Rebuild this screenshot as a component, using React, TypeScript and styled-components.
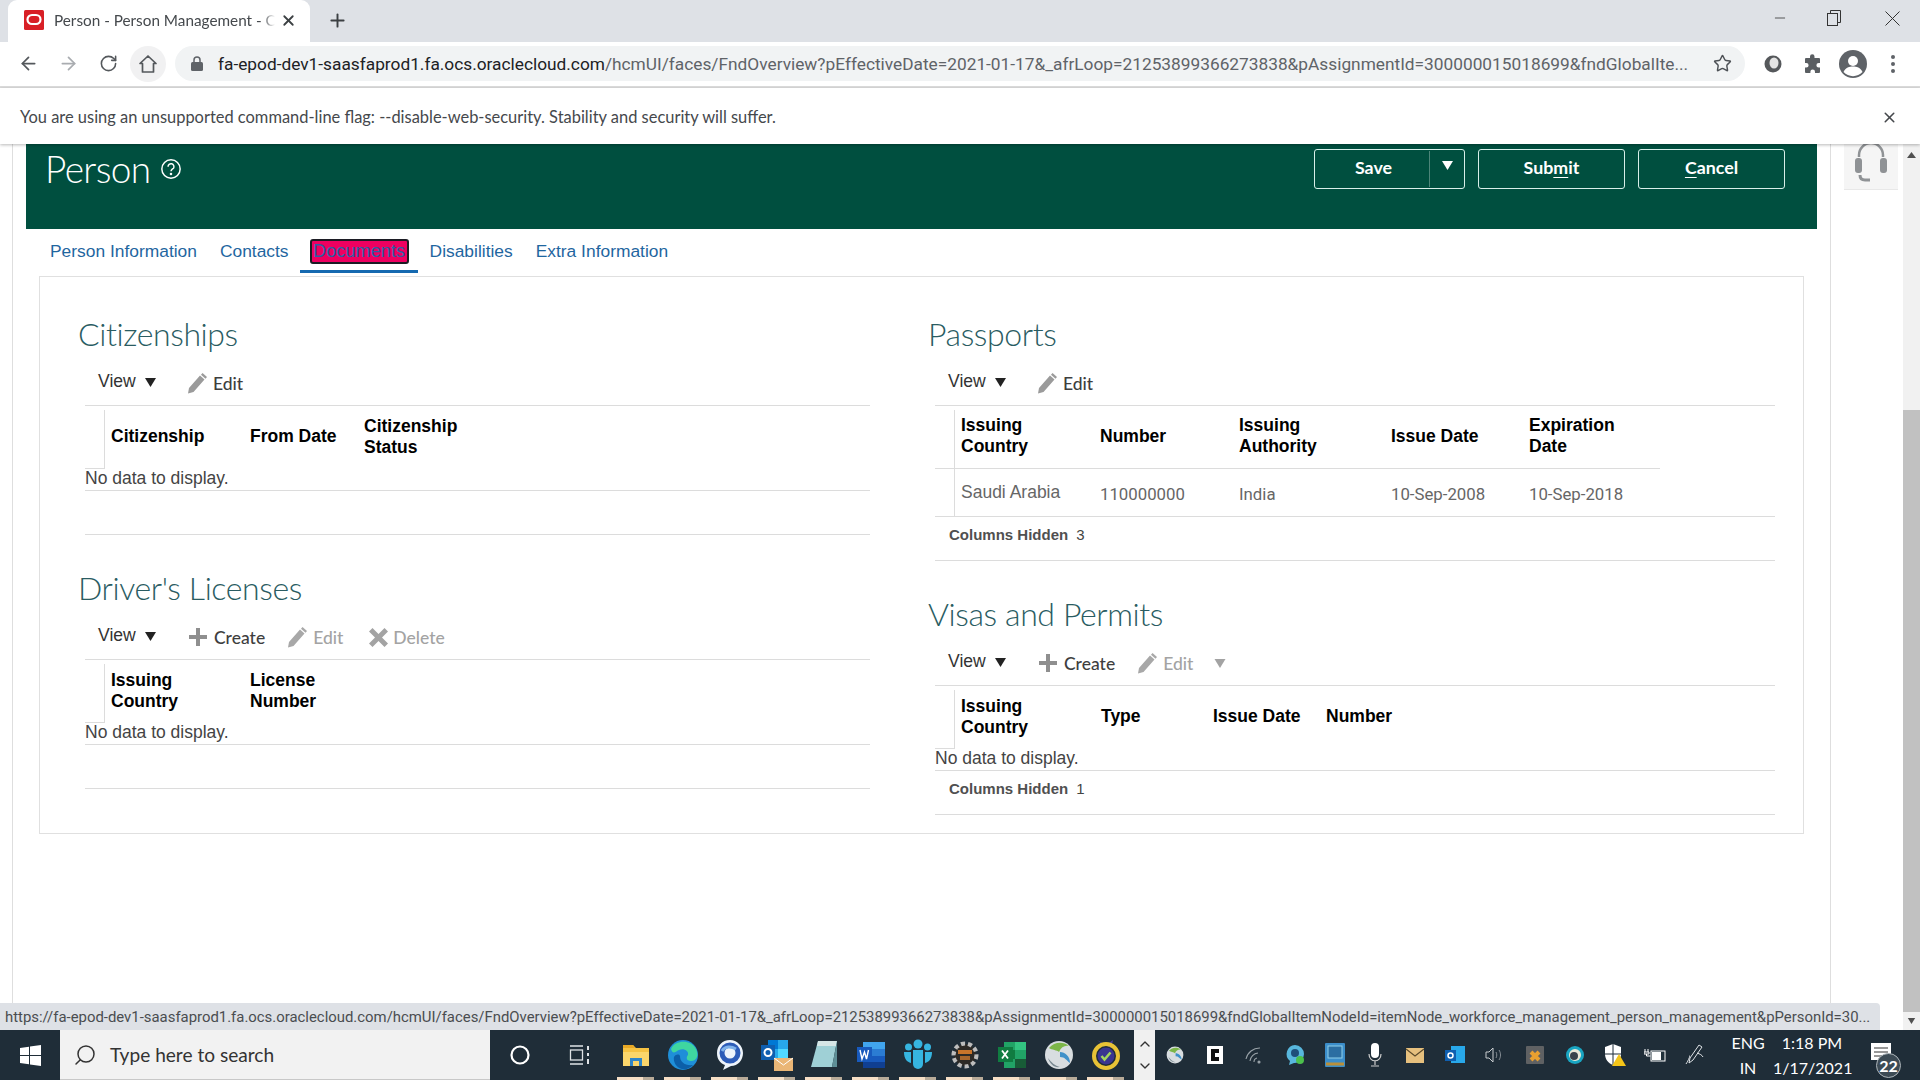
import React from "react";
import styled, { createGlobalStyle } from "styled-components";
import { ArrowLeft, ArrowRight, RotateCw, Star, Search, Minus, X, Plus, ChevronUp, ChevronDown } from "lucide-react";

const Global = createGlobalStyle`
  html, body { margin: 0; padding: 0; background: #fff; overflow: hidden; }
  * { box-sizing: border-box; }
`;

const UI = `"Lato", "Open Sans", "Liberation Sans", sans-serif`;
const ROBOTO = `"Roboto", "Open Sans", sans-serif`;
const ARIAL = `"Liberation Sans", Arial, sans-serif`;

const Screen = styled.div`
  width: 1920px; height: 1080px; display: flex; flex-direction: column; overflow: hidden; font-family: ${UI}; background: #fff;
`;
const TabStrip = styled.div`
  height: 42px; background: #dee1e6; display: flex; align-items: flex-end; padding-left: 8px; flex: none;
`;
const BrowserTab = styled.div`
  width: 302px; height: 42px; background: #fff; border-radius: 9px 9px 0 0; display: flex; align-items: center; padding: 0 12px 2px 16px; color: #3c4043;
`;
const TabTitle = styled.span`
  font-size: 15.3px; margin-left: 10px; width: 221px; white-space: nowrap; overflow: hidden; color: #45494d;
  -webkit-mask-image: linear-gradient(90deg, #000 94%, transparent);
`;
const TabClose = styled.span`margin-left: 5px; display: flex; color: #3c4043;`;
const NewTab = styled.span`margin: 0 0 2px 17px; align-self: center; display: flex; color: #3c4043;`;
const WindowControls = styled.div`
  margin-left: auto; display: flex; align-self: flex-start; height: 36px; align-items: center; color: #333;
`;
const WinButton = styled.span`
  width: 56px; display: flex; justify-content: center;
  &:nth-child(2) { padding-right: 5px; }
`;

const ToolBar = styled.div`
  height: 46px; flex: none; background: #fff; display: flex; align-items: center; padding: 0 0 1px 8px; border-bottom: 2px solid #dcdcdc;
`;
const NavButton = styled.span<{ $dim?: boolean; $round?: boolean }>`
  width: 40px; height: 36px; display: flex; align-items: center; justify-content: center; color: ${p => (p.$dim ? "#a9acb0" : "#54585c")};
  ${p => p.$round && `background: #f1f1f2; border-radius: 50%; width: 36px; margin-left: 2px; margin-right: 2px;`}
`;
const Omnibox = styled.div`
  margin-left: 7px; width: 1570px; height: 35px; border-radius: 18px; background: #f1f3f4; display: flex; align-items: center; padding: 0 13px 0 16px;
`;
const UrlText = styled.div`
  margin-left: 15px; flex: 1; font: 400 17.3px ${ROBOTO}; white-space: nowrap; color: #5f6368;
  b { font-weight: 400; color: #202124; }
`;
const ExtArea = styled.div`display: flex; margin-left: 8px;`;
const ExtButton = styled.span`width: 40px; display: flex; justify-content: center; align-items: center;`;

const InfoBar = styled.div`
  height: 56px; flex: none; background: #fff; display: flex; align-items: center; justify-content: space-between; padding: 2px 22px 0 20px; font-size: 16.45px; color: #45484c;
  position: relative; z-index: 2; box-shadow: 0 1px 3px rgba(0,0,0,.28);
`;

const Content = styled.div`
  flex: 1; display: flex; position: relative; min-height: 0; background: #fff;
`;
const Main = styled.div`
  width: 1819px; margin-left: 12px; flex: none; border-left: 1px solid #dedede; border-right: 1px solid #dedede; padding-left: 13px;
`;
const Banner = styled.div`
  width: 1791px; height: 85px; background: #004f3f; display: flex; align-items: flex-start; justify-content: space-between; padding: 5px 32px 0 19px;
`;
const TitleGroup = styled.div`display: flex; align-items: center; height: 40px; color: #fff; gap: 9px;`;
const PageTitle = styled.h1`
  margin: 0; font: 300 37px/40px ${UI}; letter-spacing: -.6px; color: #fff;
`;
const ButtonRow = styled.div`display: flex; gap: 13px;`;
const ActionButton = styled.button`
  width: 147px; height: 40px; background: transparent; border: 1px solid #d8efe9; border-radius: 3px; color: #fff; font: 700 17.8px ${UI}; padding: 0 0 4px;
  u { text-underline-offset: 3px; }
`;
const SplitButton = styled.div`
  width: 151px; height: 40px; border: 1px solid #d8efe9; border-radius: 3px; display: flex; color: #fff; font: 700 17.8px ${UI}; align-items: center;
`;
const SplitLabel = styled.span`width: 115px; text-align: center; height: 36px; line-height: 33px; padding-left: 3px; border-right: 1px solid #4d8579;`;
const SplitCaret = styled.span`flex: 1; display: flex; justify-content: center; padding-bottom: 8px;`;

const Tabs = styled.nav`display: flex; height: 44px; padding-left: 12.5px; margin-bottom: 3px;`;
const PageTab = styled.a<{ $active?: boolean }>`
  padding: 4px 11.5px 0; height: 44px; display: flex; align-items: center; font: 400 17.4px ${ARIAL}; color: #1f669f;
  border-bottom: 3px solid ${p => (p.$active ? "#1569b0" : "transparent")};
`;
const FocusMark = styled.span`
  display: inline-block; margin: 0 -2px; padding: 0 1.5px; height: 25px; font-size: 18.2px; line-height: 21px; background: #ee0060; border: 2px solid #1c1c24; border-radius: 3px; color: #2b5fa6;
`;

const Card = styled.section`
  margin-left: 13px; width: 1765px; height: 558px; border: 1px solid #e0e0e0; padding: 38px 0 0 39px; display: grid; grid-template-columns: 850px 847px; align-items: start;
`;
const Column = styled.div`display: flex; flex-direction: column; gap: 34px;`;
const Section = styled.div``;
const Heading = styled.h2`
  margin: 0 0 4px -1px; font: 300 32px/38px ${UI}; letter-spacing: -.4px; color: #2a5c62;
`;
const Body = styled.div<{ $width: number }>`margin-left: 6px; width: ${p => p.$width}px;`;
const Actions = styled.div`
  height: 49px; border-bottom: 1px solid #dcdcdc; display: flex; align-items: center; padding-left: 13px; padding-top: 4px;
`;
const ViewMenu = styled.span`
  font: 400 17.6px ${ARIAL}; color: #333; display: flex; align-items: center; gap: 9px; margin-top: -4px; width: 60px; margin-right: 29px;
  svg { margin-top: 3px; }
`;
const ActionItem = styled.span<{ $off?: boolean; $wide?: boolean; $tight?: boolean }>`
  display: flex; align-items: center; gap: ${p => (p.$wide ? "7px" : "5px")}; font: 500 17.5px ${UI}; color: ${p => (p.$off ? "#a3a3a3" : "#3e3e3e")}; margin-right: ${p => (p.$wide ? "22px" : "26px")};
  ${p => p.$wide && "margin-left: 2px;"}
  ${p => p.$tight && "margin-left: -5px;"}
  svg { flex: none; }
`;
const HeadRow = styled.div`display: flex; height: 63px;`;
const Corner = styled.div`width: 20px; margin-top: 4px; border-right: 1px solid #dcdcdc; border-bottom: 1px solid #dcdcdc; flex: none;`;
const HeadCells = styled.div<{ $lined?: boolean }>`display: flex; ${p => p.$lined && "border-bottom: 1px solid #dcdcdc;"}`;
const HeadCell = styled.div<{ $w: number }>`
  width: ${p => p.$w}px; padding: 0 0 2px 6px; font: 700 17.5px/21px ${ARIAL}; color: #000; display: flex; align-items: center;
`;
const NoData = styled.div`
  height: 22px; font: 400 17.5px/18px ${ARIAL}; color: #444; border-bottom: 1px solid #dcdcdc;
`;
const DataRow = styled.div`display: flex; height: 48px; border-bottom: 1px solid #dcdcdc;`;
const DataLead = styled.div`width: 20px; border-right: 1px solid #dcdcdc; flex: none;`;
const DataCell = styled.div<{ $w: number; $arial?: boolean }>`
  width: ${p => p.$w}px; padding-left: 6px; display: flex; align-items: center; color: #666;
  font: 400 ${p => (p.$arial ? "17.5px" : "16.8px")} ${p => (p.$arial ? ARIAL : ROBOTO)};
  ${p => !p.$arial && "padding-top: 2px;"}
`;
const Footer = styled.div`
  height: 44px; border-bottom: 1px solid #dcdcdc; padding: 0 0 8px 14px; display: flex; align-items: center; gap: 8px; font: 400 15px ${ARIAL}; color: #444;
  b { color: #505050; }
`;

const StatusBubble = styled.div`
  position: absolute; left: 0; bottom: 0; width: 1880px; height: 27px; background: #dee1e6; border-top-right-radius: 4px; z-index: 3; font: 400 14.9px/28px ${ROBOTO}; padding-left: 5px; color: #4a4d50; white-space: nowrap;
`;
const SidePanel = styled.div`width: 72px; flex: none; padding-left: 13px;`;
const HelpTile = styled.div`width: 54px; height: 46px; background: #f5f5f5; border-bottom: 1px solid #e8e8e8; display: flex; justify-content: center; overflow: hidden;`;
const Scrollbar = styled.div`
  width: 17px; flex: none; background: #f1f1f1; display: flex; flex-direction: column; align-items: center;
`;
const ScrollThumb = styled.div`width: 17px; height: 602px; margin-top: 244px; background: #c1c1c1;`;
const ScrollEnd = styled.div<{ $h: number }>`
  height: ${p => p.$h}px; width: 17px; display: flex; align-items: center; justify-content: center;
`;

const Taskbar = styled.footer`
  height: 50px; flex: none; background: #1f2d38; display: flex; align-items: stretch; color: #fff;
`;
const StartButton = styled.div`width: 60px; display: flex; align-items: center; justify-content: center;`;
const SearchBox = styled.div`
  width: 430px; background: #f2f2f2; display: flex; align-items: center; padding-left: 13px; gap: 13px; font-size: 19.1px; color: #333; border-bottom: 1px solid #c8c8c8;
`;
const TaskSlot = styled.div`width: 60px; display: flex; align-items: center; justify-content: center;`;
const AppSlot = styled.div<{ $first?: boolean }>`
  width: 47px; display: flex; align-items: center; justify-content: center; position: relative; margin-left: ${p => (p.$first ? "2px" : "0")};
  &::after { content: ""; position: absolute; left: 5px; right: 5px; bottom: 0; height: 3px; background: linear-gradient(90deg, #f6dfc6 70%, #b8ab99 70%); }
`;
const OverflowChevrons = styled.div`
  width: 21px; margin-left: 5px; background: #f0f0f0; display: flex; flex-direction: column; align-items: center; justify-content: space-around; color: #333; padding: 3px 0;
`;
const Tray = styled.div`display: flex; width: 568px;`;
const TrayIcon = styled.div`width: 40px; display: flex; align-items: center; justify-content: center; flex: none;`;
const Lang = styled.div`
  width: 50px; text-align: center; font-size: 16px; line-height: 25px;
`;
const Clock = styled.div`width: 78px; text-align: center; font-size: 16px; line-height: 25px;`;
const NoticeArea = styled.div`flex: 1; position: relative; display: flex; align-items: center; justify-content: center; padding: 0 10px 4px 0;`;
const NoticeBadge = styled.span`
  position: absolute; left: 25px; top: 23px; width: 25px; height: 25px; border-radius: 50%; background: #3d4b55; border: 1px solid #aeb6bb; font: 700 16px/23px ${UI}; text-align: center; color: #fff;
`;

const Pencil = ({ off }: { off?: boolean }) => (
  <svg width="21" height="22" viewBox="0 0 21 22"><path d="M15.5 1l4.5 4-1.5 1.7-4.5-4zM13 3.6l4.5 4L6.5 20 1 21.5l1-5.6z" fill={off ? "#a8a8a8" : "#9b9b9b"} /></svg>
);
const PlusIcon = () => (
  <svg width="18" height="18" viewBox="0 0 18 18"><path d="M7 0h4v7h7v4h-7v7H7v-7H0V7h7z" fill="#8f8f8f" /></svg>
);
const CrossIcon = () => (
  <svg width="19" height="19" viewBox="0 0 19 19"><path d="M3.500 0l6 6 6-6L19 3.500l-6 6 6 6-3.500 3.500-6-6-6 6L0 15.500l6-6-6-6z" fill="#a3a3a3" /></svg>
);
const Caret = ({ color = "#222", w = 11, h = 9 }: { color?: string; w?: number; h?: number }) => (
  <svg width={w} height={h} viewBox="0 0 11 9"><path d="M0 0h11L5.500 9z" fill={color} /></svg>
);
const UpCaret = () => (
  <svg width="9" height="6" viewBox="0 0 9 6"><path d="M0 6h9L4.500 0z" fill="#505050" /></svg>
);
const HouseIcon = () => (
  <svg width="20" height="20" viewBox="0 0 20 20" fill="none" stroke="#54585c" strokeWidth="1.700" strokeLinejoin="round"><path d="M10 2L2 9.500h2.500V18h11V9.500H18z" /></svg>
);
const Favicon = () => (
  <svg width="20" height="20" viewBox="0 0 20 20"><rect width="20" height="20" rx="1.500" fill="#d81f26" /><rect x="3.500" y="5" width="13" height="9" rx="4.500" fill="none" stroke="#fff" strokeWidth="2.200" /></svg>
);
const Lock = () => (
  <svg width="12" height="15" viewBox="0 0 12 15"><path d="M3 6V4a3 3 0 016 0v2" fill="none" stroke="#5f6368" strokeWidth="1.500" /><rect y="6" width="12" height="9" rx="1.500" fill="#5f6368" /></svg>
);
const HelpIcon = () => (
  <svg width="22" height="22" viewBox="0 0 24 24" fill="none" stroke="#fff" strokeWidth="1.600"><circle cx="12" cy="12" r="10" /><path d="M8.800 9.500a3.200 3.200 0 116 1.500c-.8 1.100-2.800 1.500-2.800 3.500" strokeWidth="1.600" /><circle cx="12" cy="17.500" r=".6" fill="#fff" /></svg>
);
const Headset = () => (
  <svg width="38" height="46" viewBox="0 0 38 46" fill="none"><path d="M7 13V11a12 12 0 0124 0v2" stroke="#8f9295" strokeWidth="2.500" /><rect x="3" y="14" width="7" height="15" rx="3" fill="#8f9295" /><rect x="28" y="14" width="7" height="15" rx="3" fill="#8f9295" /><path d="M8 31c0 4 2 5 5 5h5" stroke="#8f9295" strokeWidth="3" /></svg>
);
const ExtBall = () => (
  <svg width="20" height="20" viewBox="0 0 20 20"><circle cx="10" cy="10" r="8.500" fill="#55585b" /><ellipse cx="11" cy="9" rx="4.500" ry="5.500" fill="#e4e4e4" /></svg>
);
const Puzzle = () => (
  <svg width="20" height="20" viewBox="0 0 20 20"><path d="M7 2.500a2.200 2.200 0 014.500 0V4H16a1 1 0 011 1v4h-1.300a2.300 2.300 0 000 4.600H17V18a1 1 0 01-1 1h-4v-1.300a2.300 2.300 0 00-4.600 0V19H3a1 1 0 01-1-1v-4.500h1.300a2.300 2.300 0 000-4.600H2V5a1 1 0 011-1h4z" fill="#5a5e62" /></svg>
);
const Avatar = () => (
  <svg width="28" height="28" viewBox="0 0 28 28"><circle cx="14" cy="14" r="14" fill="#5f6368" /><circle cx="14" cy="11" r="5" fill="#fff" /><path d="M4.500 22c2-4.500 6-5.500 9.500-5.500s7.500 1 9.500 5.500a13 13 0 01-19 0z" fill="#fff" /></svg>
);
const Dots = () => (
  <svg width="4" height="18" viewBox="0 0 4 18" fill="#5f6368"><circle cx="2" cy="2" r="2" /><circle cx="2" cy="9" r="2" /><circle cx="2" cy="16" r="2" /></svg>
);
const Restore = () => (
  <svg width="14" height="16" viewBox="0 0 14 16" fill="none" stroke="#333"><rect x=".5" y="3.500" width="10" height="12" /><path d="M3.500 3.500v-3h10v12h-3" /></svg>
);
const ThinX = () => (
  <svg width="15" height="15" viewBox="0 0 15 15" stroke="#333" fill="none"><path d="M.5.500l14 14M14.500.500l-14 14" /></svg>
);
const WinLogo = () => (
  <svg width="21" height="21" viewBox="0 0 21 21" fill="#fff"><path d="M0 3l9-1.300V10H0zM10 1.500L21 0v10H10zM0 11h9v8.300L0 18zM10 11h11v10l-11-1.500z" /></svg>
);
const TaskView = () => (
  <svg width="22" height="20" viewBox="0 0 22 20" fill="none" stroke="#dfe3e6" strokeWidth="1.300"><path d="M1 1h13M1 19h13" /><rect x="1.500" y="5" width="12" height="10" /><path d="M19 1v4M19 8v3M19 14v5" strokeWidth="2" /></svg>
);

const FolderApp = () => (
  <svg width="28" height="26" viewBox="0 0 28 26"><path d="M1 3h10l3 3h13v18H1z" fill="#f6c343" /><path d="M1 3h10l2 3H1z" fill="#e8a825" /><rect x="1" y="10" width="26" height="14" fill="#fbd66b" /><path d="M8 24v-8h12v8h-3v-5h-6v5z" fill="#2f85c8" /></svg>
);
const EdgeApp = () => (
  <svg width="32" height="32" viewBox="0 0 32 32"><circle cx="16" cy="16" r="15" fill="#1f8fd8" /><path d="M4 10C8 1 24 0 29 10c3 6 1 12-5 12-5 0-5-4-3-6 1-4-4-7-9-5-4 2-6 5-8-1z" fill="#3fd6a0" /><path d="M13 17c0 6 5 10 13 9-3 3-7 5-11 4-6-1-9-8-8-12 2-3 5-3 6-1z" fill="#0c5fa8" /></svg>
);
const BubbleApp = () => (
  <svg width="28" height="32" viewBox="0 0 28 32"><path d="M14 1C6 1 1 7 1 14c0 6 3 10 8 12l-2 5 8-4c7 0 12-6 12-13S21 1 14 1z" fill="#eef4fb" /><circle cx="14" cy="14" r="8" fill="none" stroke="#2d5cb8" strokeWidth="5" /><path d="M6 12c3-5 9-5 14-2" stroke="#7fb2ea" strokeWidth="3" fill="none" /></svg>
);
const OutlookApp = () => (
  <svg width="34" height="32" viewBox="0 0 34 32"><rect x="8" y="1" width="20" height="18" fill="#28a8ea" /><rect x="8" y="1" width="10" height="9" fill="#0078d4" /><rect x="18" y="10" width="10" height="9" fill="#50d9ff" /><rect x="1" y="6" width="14" height="15" fill="#0f5fb0" /><circle cx="8" cy="13.500" r="3.500" fill="none" stroke="#fff" strokeWidth="2" /><rect x="14" y="19" width="19" height="13" fill="#eab676" /><path d="M14 19l9.500 7 9.500-7" fill="none" stroke="#fff" strokeWidth="1" /></svg>
);
const NotesApp = () => (
  <svg width="28" height="30" viewBox="0 0 28 30"><path d="M8 1h19l-5 26H1z" fill="#9fd0d6" /><path d="M8 1h19l-1 5H7z" fill="#d6e6e6" /><path d="M22 27L27 1l0 26z" fill="#5e8f97" /></svg>
);
const WordApp = () => (
  <svg width="30" height="30" viewBox="0 0 30 30"><rect x="7" y="2" width="22" height="26" fill="#2b7cd3" /><rect x="7" y="2" width="22" height="7" fill="#41a5ee" /><rect x="7" y="16" width="22" height="6" fill="#185abd" /><rect x="7" y="22" width="22" height="6" fill="#103f91" /><rect x="1" y="7" width="15" height="15" fill="#185abd" /><path d="M4 10l2 9 2.500-7 2 7 2-9" fill="none" stroke="#fff" strokeWidth="1.400" /></svg>
);
const PeopleApp = () => (
  <svg width="30" height="32" viewBox="0 0 30 32" fill="#36b5e0"><circle cx="15" cy="5" r="4.500" /><circle cx="5.500" cy="8" r="3.500" /><circle cx="24.500" cy="8" r="3.500" /><path d="M10 11h10v14a5 5 0 01-10 0z" /><path d="M1 13h7v11c-4-1-7-4-7-11zM22 13h7c0 7-3 10-7 11z" /></svg>
);
const GearApp = () => (
  <svg width="30" height="30" viewBox="0 0 30 30"><circle cx="15" cy="15" r="11" fill="#2d2a26" stroke="#bdbdbd" strokeWidth="5" strokeDasharray="4 2.800" /><circle cx="15" cy="15" r="9.500" fill="#2d2a26" /><rect x="8" y="10" width="14" height="4" fill="#c8742a" /><rect x="10" y="16" width="10" height="4" fill="#a8662c" /></svg>
);
const ExcelApp = () => (
  <svg width="30" height="30" viewBox="0 0 30 30"><rect x="7" y="2" width="22" height="26" fill="#21a366" /><rect x="18" y="2" width="11" height="8" fill="#33c481" /><rect x="7" y="10" width="11" height="9" fill="#107c41" /><rect x="18" y="19" width="11" height="9" fill="#185c37" /><rect x="1" y="7" width="15" height="15" fill="#107c41" /><path d="M5 10.500l6 8M11 10.500l-6 8" stroke="#fff" strokeWidth="1.800" /></svg>
);
const GlobeApp = ({ s = 30 }: { s?: number }) => (
  <svg width={s} height={s} viewBox="0 0 30 30"><circle cx="15" cy="15" r="14" fill="#d8dde0" /><path d="M5 8c5-6 14-7 20-2-4-1-8 1-10 6-2-2-7-2-10-4z" fill="#7cb648" /><path d="M16 12c5 0 10 4 10 11-4-3-5-6-10-6z" fill="#3f90c9" /><path d="M4 18c3 4 7 8 12 9-6 1-10-3-12-9z" fill="#7a8a92" /></svg>
);
const BadgeApp = () => (
  <svg width="30" height="34" viewBox="0 0 30 34"><path d="M6 2l8 6 8-6-2 8z" fill="#4a3f9c" /><circle cx="15" cy="18" r="12" fill="none" stroke="#e8c236" strokeWidth="4" /><circle cx="15" cy="18" r="8.500" fill="#3a3590" /><path d="M10.500 18l3 3.500 6-7" fill="none" stroke="#a4d65e" strokeWidth="2.500" /></svg>
);

const TrayGlobe = () => <GlobeApp s={18} />;
const TrayC = () => (
  <svg width="16" height="18" viewBox="0 0 16 18"><rect width="16" height="18" fill="#fff" /><path d="M12 5H6v8h6" fill="none" stroke="#111" strokeWidth="4" /></svg>
);
const Wifi = () => (
  <svg width="20" height="18" viewBox="0 0 20 18" fill="none" stroke="#9aa3a9" strokeWidth="1.100"><path d="M1 13a14 14 0 0114-11M5 15a9 9 0 018-8M9 16a4 4 0 013-4" /><circle cx="14" cy="16" r="1" fill="#9aa3a9" /></svg>
);
const TrayChat = () => (
  <svg width="20" height="22" viewBox="0 0 20 22"><path d="M10 1a9 9 0 00-5 16l-1 4 5-2h1a9 9 0 000-18z" fill="#58b7dd" /><circle cx="10" cy="9" r="4" fill="#1f4f7a" /><circle cx="15" cy="16" r="4" fill="#4cc04c" /></svg>
);
const TrayBlue = () => (
  <svg width="20" height="24" viewBox="0 0 20 24"><rect width="20" height="24" rx="1" fill="#3b8dc9" /><rect x="3" y="3" width="14" height="12" fill="#2b6ea2" stroke="#8fd0ea" /><path d="M1 21h18" stroke="#b98f3a" strokeWidth="3" /></svg>
);
const Mic = () => (
  <svg width="14" height="24" viewBox="0 0 14 24"><rect x="3" y="0" width="8" height="15" rx="4" fill="#fff" /><path d="M1 11c0 9 12 9 12 0M7 18v4M3 23h8" fill="none" stroke="#ccc" strokeWidth="1.200" /></svg>
);
const MailIcon = () => (
  <svg width="18" height="15" viewBox="0 0 18 15"><rect width="18" height="15" fill="#e6c07e" /><path d="M0 1l9 7 9-7" fill="none" stroke="#5b4a2b" strokeWidth="1.200" /></svg>
);
const TrayOutlook = () => (
  <svg width="20" height="20" viewBox="0 0 20 20"><rect x="6" y="1" width="14" height="17" fill="#28a8ea" /><rect x="0" y="5" width="11" height="11" fill="#0f5fb0" /><circle cx="5.500" cy="10.500" r="2.500" fill="none" stroke="#fff" strokeWidth="1.500" /></svg>
);
const Speaker = () => (
  <svg width="20" height="16" viewBox="0 0 20 16" fill="none" stroke="#c8ccce" strokeWidth="1"><path d="M1 5h3l4-4v14l-4-4H1z" /><path d="M11 5c1 2 1 4 0 6M14 3c2 3 2 7 0 10" opacity=".6" /></svg>
);
const TrayOrange = () => (
  <svg width="18" height="18" viewBox="0 0 18 18"><rect width="18" height="18" rx="1" fill="#5f6163" /><path d="M5 6l8 8M13 6l-8 8" stroke="#e8a030" strokeWidth="4" /></svg>
);
const TrayRing = () => (
  <svg width="20" height="20" viewBox="0 0 20 20"><circle cx="10" cy="10" r="9" fill="#19a5c2" /><circle cx="10" cy="10" r="6" fill="#e8ead8" /><circle cx="9" cy="11" r="4" fill="#38454c" /></svg>
);
const Shield = () => (
  <svg width="22" height="22" viewBox="0 0 22 22"><path d="M9 0l8 3v7c0 5-3 9-8 11-5-2-8-6-8-11V3z" fill="#fff" /><path d="M9 0v21M1 10h16" stroke="#1f2d38" /><path d="M15 10l7 12H8z" fill="#f5c518" /></svg>
);
const Plug = () => (
  <svg width="22" height="14" viewBox="0 0 22 14"><rect x="7" y="3" width="14" height="10" fill="#20303a" stroke="#fff" /><rect x="8" y="4" width="9" height="8" fill="#fff" /><path d="M1 1v3M4 1v3M0 4h5v2H0zM2.500 6v2h4" stroke="#fff" fill="none" /></svg>
);
const PenTray = () => (
  <svg width="20" height="22" viewBox="0 0 20 22" fill="none" stroke="#dfe3e6" strokeWidth="1"><path d="M14 1l3 2-9 13-4 3 1-5zM1 20c2-3 5-9 3-8M12 9c3 1 5 2 6 4" /></svg>
);
const NoticeGlyph = () => (
  <svg width="20" height="20" viewBox="0 0 20 20"><path d="M0 0h20v17h-8l-3 3v-3H0z" fill="#fff" /><path d="M3 5h14M3 9h14M3 13h9" stroke="#333" strokeWidth="1.200" /></svg>
);

type Col = { label: React.ReactNode; w: number };

const Head = ({ cols, lined }: { cols: Col[]; lined?: boolean }) => (
  <HeadRow>
    <Corner />
    <HeadCells $lined={lined}>
      {cols.map((c, i) => (
        <HeadCell key={i} $w={c.w}>{c.label}</HeadCell>
      ))}
    </HeadCells>
  </HeadRow>
);

const apps = [FolderApp, EdgeApp, BubbleApp, OutlookApp, NotesApp, WordApp, PeopleApp, GearApp, ExcelApp, GlobeApp, BadgeApp];
const tray = [TrayGlobe, TrayC, Wifi, TrayChat, TrayBlue, Mic, MailIcon, TrayOutlook, Speaker, TrayOrange, TrayRing, Shield, Plug, PenTray];

export default function App() {
  return (
    <Screen>
      <Global />
      <TabStrip>
        <BrowserTab>
          <Favicon />
          <TabTitle>Person - Person Management - C</TabTitle>
          <TabClose><X size={17} strokeWidth={2.500} /></TabClose>
        </BrowserTab>
        <NewTab><Plus size={21} strokeWidth={2.200} /></NewTab>
        <WindowControls>
          <WinButton><Minus size={16} strokeWidth={1.200} /></WinButton>
          <WinButton><Restore /></WinButton>
          <WinButton><ThinX /></WinButton>
        </WindowControls>
      </TabStrip>
      <ToolBar>
        <NavButton><ArrowLeft size={21} /></NavButton>
        <NavButton $dim><ArrowRight size={21} /></NavButton>
        <NavButton><RotateCw size={19} /></NavButton>
        <NavButton $round><HouseIcon /></NavButton>
        <Omnibox>
          <Lock />
          <UrlText><b>fa-epod-dev1-saasfaprod1.fa.ocs.oraclecloud.com</b>/hcmUI/faces/FndOverview?pEffectiveDate=2021-01-17&amp;_afrLoop=21253899366273838&amp;pAssignmentId=300000015018699&amp;fndGlobalIte...</UrlText>
          <Star size={19} color="#4d5156" strokeWidth={1.800} />
        </Omnibox>
        <ExtArea>
          <ExtButton><ExtBall /></ExtButton>
          <ExtButton><Puzzle /></ExtButton>
          <ExtButton><Avatar /></ExtButton>
          <ExtButton><Dots /></ExtButton>
        </ExtArea>
      </ToolBar>
      <InfoBar>
        <span>You are using an unsupported command-line flag: --disable-web-security. Stability and security will suffer.</span>
        <X size={17} color="#45484c" strokeWidth={2.200} />
      </InfoBar>
      <Content>
        <Main>
          <Banner>
            <TitleGroup>
              <PageTitle>Person</PageTitle>
              <HelpIcon />
            </TitleGroup>
            <ButtonRow>
              <SplitButton>
                <SplitLabel>Save</SplitLabel>
                <SplitCaret><Caret color="#fff" w={11} h={9} /></SplitCaret>
              </SplitButton>
              <ActionButton>Sub<u>m</u>it</ActionButton>
              <ActionButton><u>C</u>ancel</ActionButton>
            </ButtonRow>
          </Banner>
          <Tabs>
            <PageTab>Person Information</PageTab>
            <PageTab>Contacts</PageTab>
            <PageTab $active><FocusMark>Documents</FocusMark></PageTab>
            <PageTab>Disabilities</PageTab>
            <PageTab>Extra Information</PageTab>
          </Tabs>
          <Card>
            <Column>
              <Section>
                <Heading>Citizenships</Heading>
                <Body $width={785}>
                  <Actions>
                    <ViewMenu>View <Caret /></ViewMenu>
                    <ActionItem><Pencil />Edit</ActionItem>
                  </Actions>
                  <Head cols={[
                    { label: "Citizenship", w: 139 },
                    { label: "From Date", w: 114 },
                    { label: <>Citizenship<br />Status</>, w: 130 },
                  ]} />
                  <NoData>No data to display.</NoData>
                  <Footer />
                </Body>
              </Section>
              <Section>
                <Heading>Driver's Licenses</Heading>
                <Body $width={785}>
                  <Actions>
                    <ViewMenu>View <Caret /></ViewMenu>
                    <ActionItem $wide><PlusIcon />Create</ActionItem>
                    <ActionItem $off><Pencil off />Edit</ActionItem>
                    <ActionItem $off><CrossIcon />Delete</ActionItem>
                  </Actions>
                  <Head cols={[
                    { label: <>Issuing<br />Country</>, w: 139 },
                    { label: <>License<br />Number</>, w: 114 },
                  ]} />
                  <NoData>No data to display.</NoData>
                  <Footer />
                </Body>
              </Section>
            </Column>
            <Column>
              <Section>
                <Heading>Passports</Heading>
                <Body $width={840}>
                  <Actions>
                    <ViewMenu>View <Caret /></ViewMenu>
                    <ActionItem><Pencil />Edit</ActionItem>
                  </Actions>
                  <Head lined cols={[
                    { label: <>Issuing<br />Country</>, w: 139 },
                    { label: "Number", w: 139 },
                    { label: <>Issuing<br />Authority</>, w: 152 },
                    { label: "Issue Date", w: 138 },
                    { label: <>Expiration<br />Date</>, w: 137 },
                  ]} />
                  <DataRow>
                    <DataLead />
                    <DataCell $w={139} $arial>Saudi Arabia</DataCell>
                    <DataCell $w={139}>110000000</DataCell>
                    <DataCell $w={152}>India</DataCell>
                    <DataCell $w={138}>10-Sep-2008</DataCell>
                    <DataCell $w={137}>10-Sep-2018</DataCell>
                  </DataRow>
                  <Footer><b>Columns Hidden</b> 3</Footer>
                </Body>
              </Section>
              <Section>
                <Heading>Visas and Permits</Heading>
                <Body $width={840}>
                  <Actions>
                    <ViewMenu>View <Caret /></ViewMenu>
                    <ActionItem $wide><PlusIcon />Create</ActionItem>
                    <ActionItem $off><Pencil off />Edit</ActionItem>
                    <ActionItem $off $tight><Caret color="#a3a3a3" w={12} h={9} /></ActionItem>
                  </Actions>
                  <Head cols={[
                    { label: <>Issuing<br />Country</>, w: 140 },
                    { label: "Type", w: 112 },
                    { label: "Issue Date", w: 113 },
                    { label: "Number", w: 100 },
                  ]} />
                  <NoData>No data to display.</NoData>
                  <Footer><b>Columns Hidden</b> 1</Footer>
                </Body>
              </Section>
            </Column>
          </Card>
        </Main>
        <SidePanel>
          <HelpTile><Headset /></HelpTile>
        </SidePanel>
        <Scrollbar>
          <ScrollEnd $h={22}><UpCaret /></ScrollEnd>
          <ScrollThumb />
          <ScrollEnd $h={18}><Caret color="#505050" w={9} h={6} /></ScrollEnd>
        </Scrollbar>
        <StatusBubble>https://fa-epod-dev1-saasfaprod1.fa.ocs.oraclecloud.com/hcmUI/faces/FndOverview?pEffectiveDate=2021-01-17&amp;_afrLoop=21253899366273838&amp;pAssignmentId=300000015018699&amp;fndGlobalItemNodeId=itemNode_workforce_management_person_management&amp;pPersonId=30...</StatusBubble>
      </Content>
      <Taskbar>
        <StartButton><WinLogo /></StartButton>
        <SearchBox><Search size={24} color="#333" strokeWidth={1.500} style={{ transform: "scaleX(-1)" }} /><span>Type here to search</span></SearchBox>
        <TaskSlot>
          <svg width="22" height="22" viewBox="0 0 22 22"><circle cx="11" cy="11" r="8.500" fill="none" stroke="#fff" strokeWidth="2.200" /></svg>
        </TaskSlot>
        <TaskSlot><TaskView /></TaskSlot>
        {apps.map((A, i) => (
          <AppSlot key={i} $first={i === 0}><A /></AppSlot>
        ))}
        <OverflowChevrons><ChevronUp size={16} /><ChevronDown size={16} /></OverflowChevrons>
        <Tray>
          {tray.map((T, i) => (
            <TrayIcon key={i}><T /></TrayIcon>
          ))}
        </Tray>
        <Lang>ENG<br />IN</Lang>
        <Clock>1:18 PM<br />1/17/2021</Clock>
        <NoticeArea>
          <NoticeGlyph />
          <NoticeBadge>22</NoticeBadge>
        </NoticeArea>
      </Taskbar>
    </Screen>
  );
}
